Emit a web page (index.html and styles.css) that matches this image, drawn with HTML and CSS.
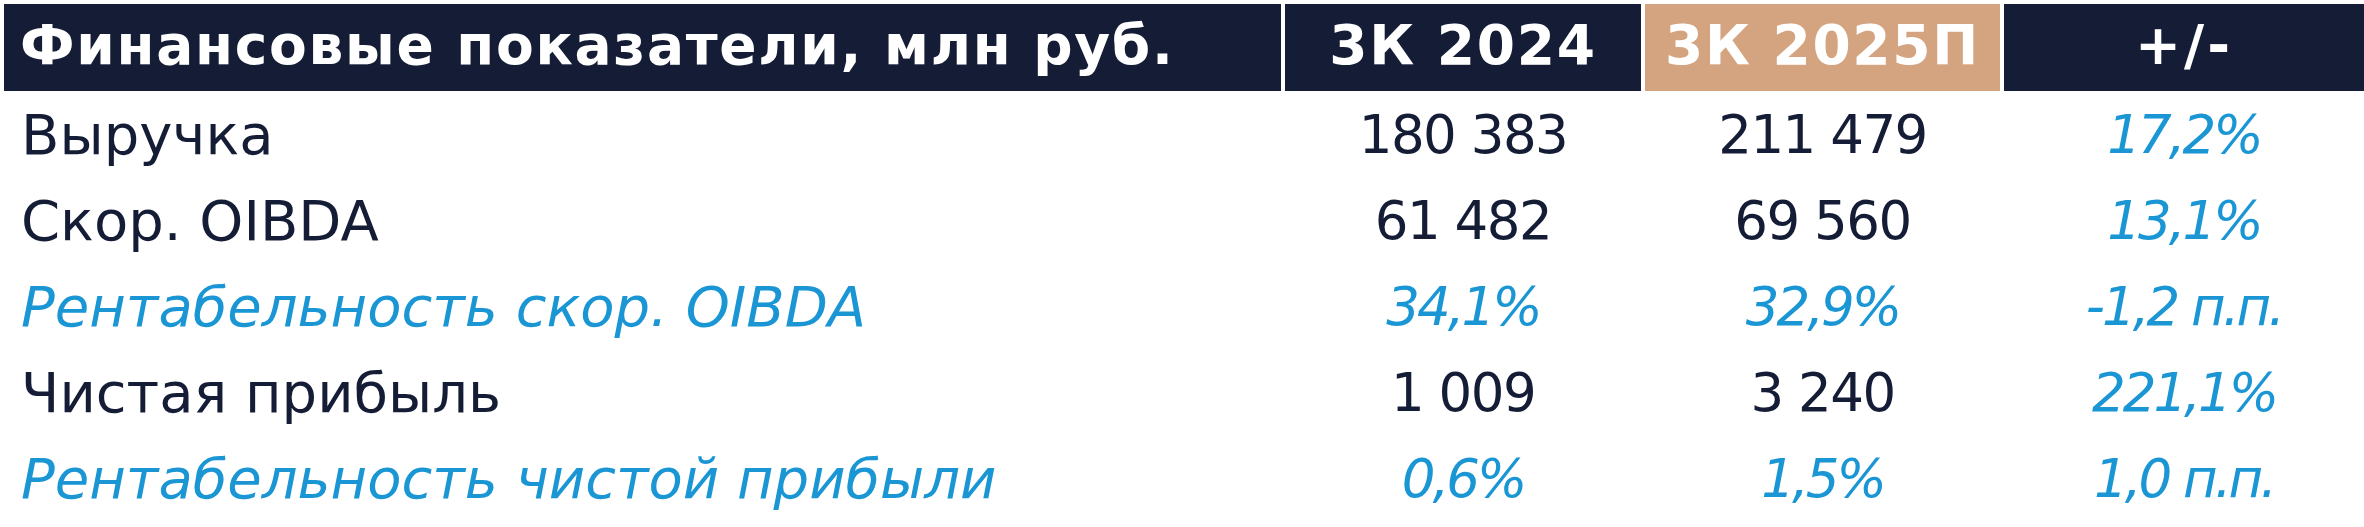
FILE: index.html
```html
<!DOCTYPE html>
<html lang="ru">
<head>
<meta charset="utf-8">
<title>Финансовые показатели</title>
<link rel="stylesheet" href="styles.css">
</head>
<body>
<div class="table">
  <div class="hcell hcell-title">Финансовые показатели, млн руб.</div>
  <div class="hcell hcell-num">3К 2024</div>
  <div class="hcell hcell-num hcell-accent">3К 2025П</div>
  <div class="hcell hcell-num hcell-sign">+/-</div>

  <div class="cell cell-label">Выручка</div>
  <div class="cell cell-num">180 383</div>
  <div class="cell cell-num">211 479</div>
  <div class="cell cell-num cell-blue">17,2%</div>

  <div class="cell cell-label">Скор. OIBDA</div>
  <div class="cell cell-num">61 482</div>
  <div class="cell cell-num">69 560</div>
  <div class="cell cell-num cell-blue">13,1%</div>

  <div class="cell cell-label cell-blue">Рентабельность скор. OIBDA</div>
  <div class="cell cell-num cell-blue">34,1%</div>
  <div class="cell cell-num cell-blue">32,9%</div>
  <div class="cell cell-num cell-blue">-1,2 п.п.</div>

  <div class="cell cell-label">Чистая прибыль</div>
  <div class="cell cell-num">1 009</div>
  <div class="cell cell-num">3 240</div>
  <div class="cell cell-num cell-blue">221,1%</div>

  <div class="cell cell-label cell-blue">Рентабельность чистой прибыли</div>
  <div class="cell cell-num cell-blue">0,6%</div>
  <div class="cell cell-num cell-blue">1,5%</div>
  <div class="cell cell-num cell-blue">1,0 п.п.</div>
</div>
</body>
</html>
```

FILE: styles.css
```css
html, body {
  margin: 0;
  padding: 0;
  background: #ffffff;
}

body {
  padding: 4px 0 0 4px;
  font-family: "DejaVu Sans", "Liberation Sans", sans-serif;
  color: #151d36;
}

.table {
  display: grid;
  grid-template-columns: 1277px 356px 355px 1fr;
  grid-template-rows: 87px repeat(5, 86px);
  column-gap: 4px;
}

.hcell {
  background: #151d36;
  color: #ffffff;
  font-weight: bold;
  font-size: 55px;
  letter-spacing: 1.7px;
  display: flex;
  align-items: center;
  padding-bottom: 6px;
  box-sizing: border-box;
}

.hcell-title {
  padding-left: 16px;
}

.hcell-num {
  justify-content: center;
}

.hcell-sign {
  letter-spacing: 3px;
}

.hcell-accent {
  background: #d4a37f;
}

.cell {
  display: flex;
  align-items: center;
  font-size: 56px;
}

.cell-label {
  padding-left: 17px;
}

.cell-num {
  justify-content: center;
  font-size: 53px;
  letter-spacing: -1.5px;
}

.cell-blue {
  color: #1a96d4;
  font-style: italic;
}

.cell-num.cell-blue {
  letter-spacing: -3px;
}
```
